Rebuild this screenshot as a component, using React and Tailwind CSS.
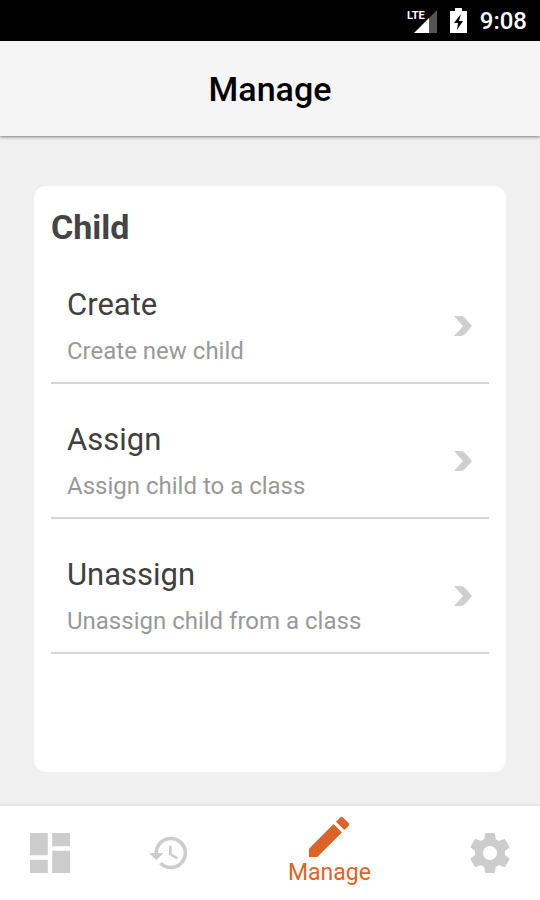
import React from "react";

const actions = [
  { title: "Create", text: "Create new child" },
  { title: "Assign", text: "Assign child to a class" },
  { title: "Unassign", text: "Unassign child from a class" },
];

const StatusBar = () => {
  return (
    <div className="flex h-[41px] shrink-0 items-center justify-end bg-black pr-[13px] text-white">
      <svg className="mr-3 h-7 w-8" viewBox="0 0 32 28" aria-hidden="true">
        <path d="M31 3v23H23V11z" fill="#555" />
        <path d="M23 11v15H8z" fill="#fff" />
        <text x="1" y="12" fontSize="11" fontWeight="700" fill="#fff" fontFamily="'Liberation Sans Narrow', Roboto, sans-serif">
          LTE
        </text>
      </svg>
      <svg className="mr-3 h-7 w-[18px]" viewBox="0 0 18 28" aria-hidden="true">
        <path d="M5 1h7v3h5v22H0V4h5z" fill="#fff" />
        <path d="M11 7L4 16h4l-1 7 6-9H9z" fill="#000" />
      </svg>
      <span className="text-2xl font-medium">9:08</span>
    </div>
  );
};

const ActionRow = ({ title, text }) => {
  return (
    <li>
      <button className="flex h-[135px] w-full items-center justify-between border-b-2 border-[#d5d5d5] px-4 pt-5 text-left">
        <span className="flex flex-col gap-[10px]">
          <span className="text-[31px] leading-10 text-[#404040]">{title}</span>
          <span className="text-2xl text-[#999]">{text}</span>
        </span>
        <svg className="h-5 w-5" viewBox="0 0 20 20" fill="#cfcfcf" aria-hidden="true">
          <path d="M1 0h7q2 0 4 2l7 8-7 8q-2 2-4 2H1l9-10z" />
        </svg>
      </button>
    </li>
  );
};

const TabBar = () => {
  return (
    <nav className="flex h-24 shrink-0 items-center justify-between border-t-2 border-[#e5e5e5] bg-white px-[30px]">
      <button aria-label="Dashboard">
        <svg className="h-10 w-10" viewBox="3 3 18 18" fill="#ccc">
          <path d="M3 13h8V3H3v10zm0 8h8v-6H3v6zm10 0h8V11h-8v10zm0-18v6h8V3h-8z" />
        </svg>
      </button>
      <button className="mr-5" aria-label="History">
        <svg className="h-10 w-10" viewBox="1 1 22 22" fill="#ccc">
          <path d="M13 3a9 9 0 0 0-9 9H1l3.89 3.89.07.14L9 12H6c0-3.87 3.13-7 7-7s7 3.13 7 7-3.13 7-7 7c-1.93 0-3.68-.79-4.94-2.06l-1.42 1.42A8.954 8.954 0 0 0 13 21a9 9 0 0 0 0-18zm-1 5v5l4.28 2.54.72-1.21-3.5-2.08V8H12z" />
        </svg>
      </button>
      <button className="mr-5 flex flex-col items-center text-[#da6428]" aria-current="page">
        <svg className="h-10 w-10" viewBox="3 3 18 18" fill="currentColor" aria-hidden="true">
          <path d="M3 17.25V21h3.75L17.81 9.94l-3.75-3.75L3 17.25zM20.71 7.04a1 1 0 0 0 0-1.41l-2.34-2.34a1 1 0 0 0-1.41 0l-1.83 1.83 3.75 3.75 1.83-1.83z" />
        </svg>
        <span className="text-[23px] leading-8">Manage</span>
      </button>
      <button aria-label="Settings">
        <svg className="h-10 w-10" viewBox="2 2 20 20" fill="#ccc">
          <path d="M19.43 12.98c.04-.32.07-.64.07-.98s-.03-.66-.07-.98l2.11-1.65c.19-.15.24-.42.12-.64l-2-3.46c-.12-.22-.39-.3-.61-.22l-2.49 1c-.52-.4-1.08-.73-1.69-.98l-.38-2.65C14.46 2.18 14.25 2 14 2h-4c-.25 0-.46.18-.49.42l-.38 2.65c-.61.25-1.17.59-1.69.98l-2.49-1c-.23-.09-.49 0-.61.22l-2 3.46c-.13.22-.07.49.12.64l2.11 1.65c-.04.32-.07.65-.07.98s.03.66.07.98l-2.11 1.65c-.19.15-.24.42-.12.64l2 3.46c.12.22.39.3.61.22l2.49-1c.52.4 1.08.73 1.69.98l.38 2.65c.03.24.24.42.49.42h4c.25 0 .46-.18.49-.42l.38-2.65c.61-.25 1.17-.59 1.69-.98l2.49 1c.23.09.49 0 .61-.22l2-3.46c.12-.22.07-.49-.12-.64l-2.11-1.65zM12 15.5c-1.93 0-3.5-1.57-3.5-3.5s1.57-3.5 3.5-3.5 3.5 1.57 3.5 3.5-1.57 3.5-3.5 3.5z" />
        </svg>
      </button>
    </nav>
  );
};

const App = () => {
  return (
    <div className="flex min-h-screen flex-col bg-[#f0f0f0] font-[Roboto,sans-serif]">
      <StatusBar />
      <header className="flex h-[95px] shrink-0 items-center justify-center bg-[#f5f5f5] pt-0.5 shadow-[0_1px_3px_rgba(0,0,0,0.5)]">
        <h1 className="text-[34px] font-medium text-black">Manage</h1>
      </header>
      <main className="flex grow flex-col px-[34px] pt-[50px] pb-8">
        <section className="grow rounded-xl bg-white px-[17px] pt-[19px]">
          <h2 className="text-[34px] leading-[44px] font-bold text-[#444]">Child</h2>
          <ul>
            {actions.map((action) => (
              <ActionRow key={action.title} title={action.title} text={action.text} />
            ))}
          </ul>
        </section>
      </main>
      <TabBar />
    </div>
  );
};

export default App;
